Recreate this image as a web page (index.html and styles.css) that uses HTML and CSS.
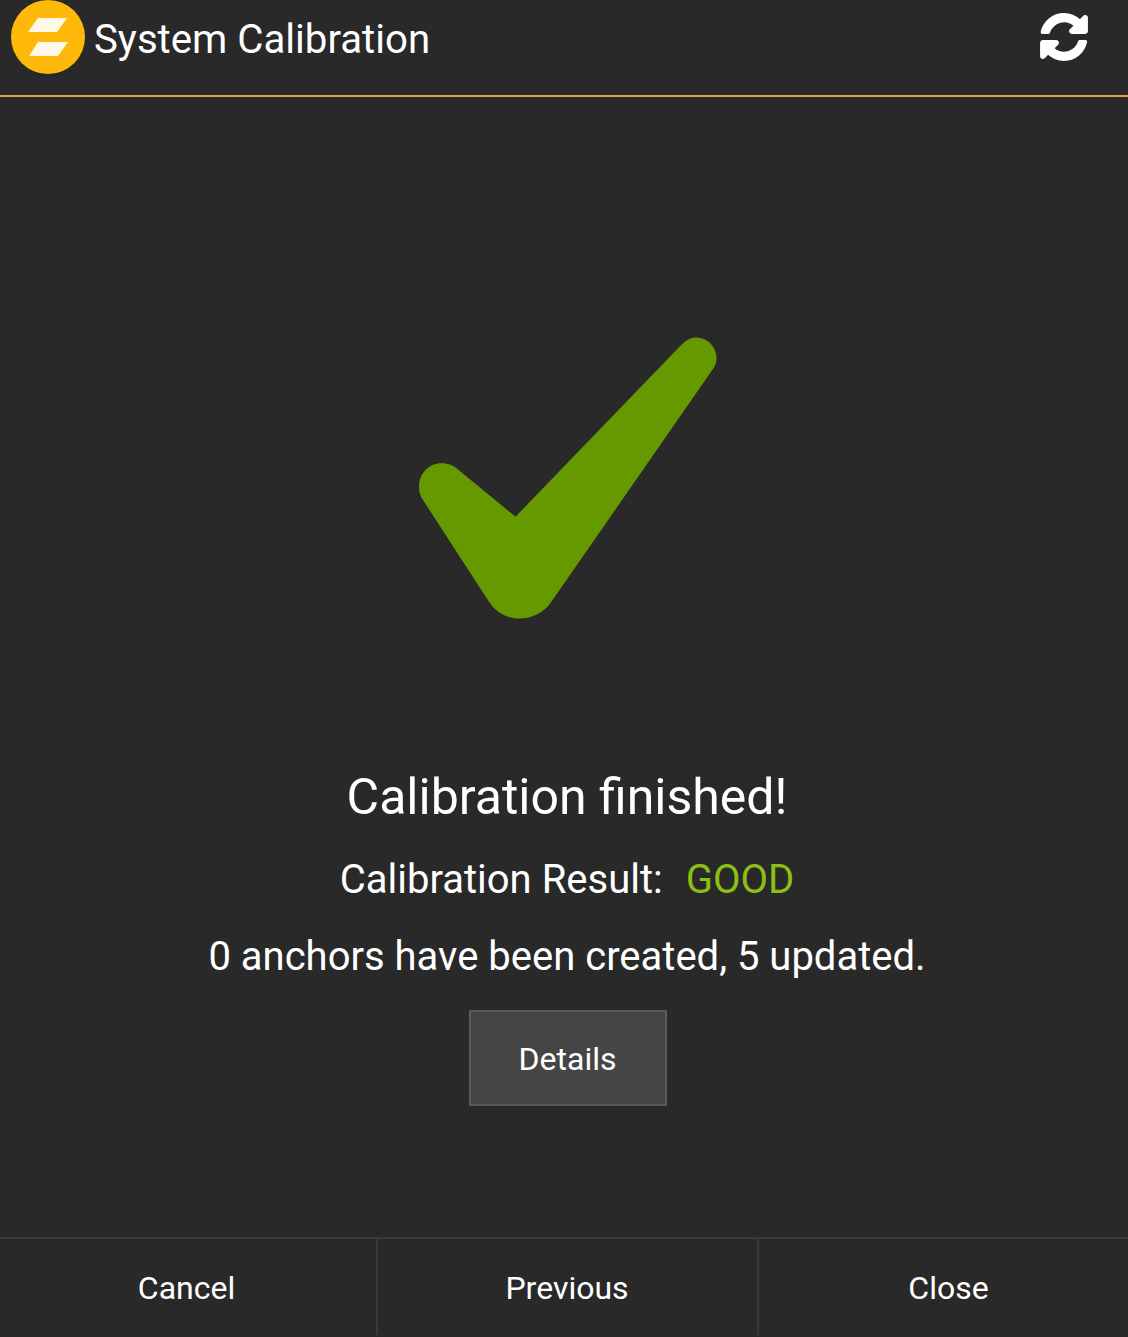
FILE: index.html
```html
<!DOCTYPE html>
<html lang="en">
<head>
<meta charset="utf-8">
<title>System Calibration</title>
<link rel="stylesheet" href="styles.css">
</head>
<body>
<div class="screen">
  <header class="topbar">
    <svg class="logo" viewBox="0 0 74 74" aria-hidden="true">
      <circle cx="37" cy="37" r="37" fill="#ffb90a"/>
      <polygon points="27,18 56,18 46,32 17,32" fill="#fff8e6"/>
      <polygon points="27,42 57,42 47,56 18,56" fill="#fff8e6"/>
    </svg>
    <h1 class="title">System Calibration</h1>
    <svg class="refresh" viewBox="0 0 1792 1792" aria-hidden="true">
      <path fill="#fff" stroke="#fff" stroke-width="50" d="M1639 1056q0 5-1 7-64 268-268 434.5t-478 166.5q-146 0-282.5-55t-243.5-157l-129 129q-19 19-45 19t-45-19-19-45v-448q0-26 19-45t45-19h448q26 0 45 19t19 45-19 45l-137 137q71 66 161 102t187 36q134 0 250-65t186-179q11-17 53-117 8-23 30-23h192q13 0 22.5 9.5t9.5 22.5zm25-800v448q0 26-19 45t-45 19h-448q-26 0-45-19t-19-45 19-45l138-138q-148-137-349-137-134 0-250 65t-186 179q-11 17-53 117-8 23-30 23h-199q-13 0-22.5-9.5t-9.5-22.5v-7q65-268 270-434.5t480-166.5q146 0 284 55.5t245 156.5l130-129q19-19 45-19t45 19 19 45z"/>
    </svg>
  </header>
  <main class="content">
    <svg class="check" viewBox="397.5 320 340 310" aria-hidden="true">
      <path fill="#669900" d="M516 516.7 L681.7 345 C686 340.5 691 337.5 696 337.5 C708 337.5 717 346.5 717 358 C717 362 716 365 714.5 367.5 L551 603 C544 612.5 533 618.5 520 618.5 C507 618.5 496 612 489 601 L422.5 498.5 C420.5 495 419.5 491 419.5 487 C419.5 473.5 429.5 463.3 442 463.3 C449 463.3 454 465.5 458.5 469.5 Z"/>
    </svg>
    <p class="headline">Calibration finished!</p>
    <p class="result">Calibration Result:<span class="good">GOOD</span></p>
    <p class="summary">0 anchors have been created, 5 updated.</p>
    <button class="details" type="button">Details</button>
  </main>
  <footer class="actions">
    <button class="action action-first" type="button">Cancel</button>
    <button class="action action-mid" type="button">Previous</button>
    <button class="action action-last" type="button">Close</button>
  </footer>
</div>
</body>
</html>
```
FILE: styles.css
```css
* { box-sizing: border-box; }
html, body { margin: 0; height: 100%; }
body {
  background: #292929;
  color: #fff;
  font-family: Roboto, "Liberation Sans", sans-serif;
}
.screen {
  width: 1128px;
  height: 1337px;
  display: flex;
  flex-direction: column;
  overflow: hidden;
}
.topbar {
  height: 97px;
  flex: none;
  display: flex;
  align-items: flex-start;
  border-bottom: 2px solid #e8993a;
  padding-left: 11px;
}
.logo { width: 74px; height: 74px; flex: none; }
.title {
  margin: 1px 0 0 9px;
  font-size: 40.2px;
  font-weight: 400;
  line-height: 78px;
  white-space: nowrap;
}
.refresh {
  width: 54px;
  height: 54px;
  flex: none;
  margin: 10px 37px 0 auto;
}
.content {
  flex: 1;
  display: flex;
  flex-direction: column;
  align-items: center;
  padding-left: 6px;
}
.check {
  width: 340px;
  height: 310px;
  margin-top: 223px;
  flex: none;
}
.headline {
  margin: 137px 0 0;
  font-size: 50px;
  line-height: 60px;
}
.result {
  margin: 28px 0 0;
  font-size: 40px;
  line-height: 50px;
}
.good { color: #8cbf14; margin-left: 23px; }
.summary {
  margin: 27px 0 0;
  font-size: 40px;
  line-height: 50px;
}
.details {
  margin: 28px 0 0 1px;
  width: 198px;
  height: 96px;
  background: #454545;
  border: 2px solid #5a5a5a;
  color: #fff;
  font: 400 32px Roboto, "Liberation Sans", sans-serif;
  padding: 2px 0 0;
}
.actions {
  height: 100px;
  flex: none;
  display: flex;
  align-items: flex-start;
  border-top: 2px solid #3a3a3a;
}
.action {
  height: 96px;
  background: transparent;
  border: 0;
  color: #fff;
  font: 400 32px Roboto, "Liberation Sans", sans-serif;
  padding: 2px 0 0;
}
.action-first { width: 376px; padding-right: 3px; }
.action-mid {
  width: 383px;
  border-left: 2px solid #3a3a3a;
  border-right: 2px solid #3a3a3a;
  padding-right: 1px;
}
.action-last { flex: 1; padding-left: 10px; }
```
